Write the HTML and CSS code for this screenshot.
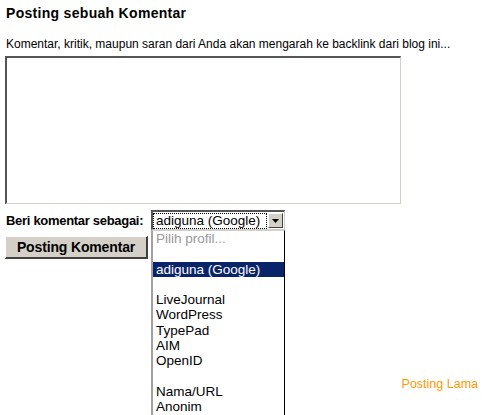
FILE: index.html
```html
<!DOCTYPE html>
<html lang="id">
<head>
    <meta charset="UTF-8">
    <meta name="viewport" content="width=device-width, initial-scale=1.0">
    <title>Posting sebuah Komentar</title>
    <link rel="stylesheet" href="styles.css">
</head>
<body>
    <div class="comment-form">
        <h4 class="comment-title">Posting sebuah Komentar</h4>
        <p class="comment-note">Komentar, kritik, maupun saran dari Anda akan mengarah ke backlink dari blog ini...</p>
        <textarea class="comment-body"></textarea>

        <div class="identity-row">
            <label class="identity-label">Beri komentar sebagai:</label>
            <div class="identity-select">
                <div class="select-box">
                    <span class="select-value">adiguna (Google)</span>
                    <span class="select-arrow">
                        <svg width="7" height="4" viewBox="0 0 7 4"><path d="M0 0h7L3.5 4z" fill="#000"/></svg>
                    </span>
                </div>

                <!-- open profile list -->
                <ul class="select-list">
                    <li class="muted">Pilih profil...</li>
                    <li></li>
                    <li class="selected">adiguna (Google)</li>
                    <li></li>
                    <li>LiveJournal</li>
                    <li>WordPress</li>
                    <li>TypePad</li>
                    <li>AIM</li>
                    <li>OpenID</li>
                    <li></li>
                    <li>Nama/URL</li>
                    <li>Anonim</li>
                </ul>
            </div>
        </div>

        <button class="post-button">Posting Komentar</button>
    </div>

    <div class="pager">
        <a class="older-link" href="#">Posting Lama</a>
    </div>
</body>
</html>
```

FILE: styles.css
```css
* {
    margin: 0;
    padding: 0;
    box-sizing: border-box;
}

html {
    height: 100%;
    overflow: hidden;
}

body {
    font-family: "Liberation Sans", Arial, sans-serif;
    font-size: 12px;
    color: #000;
    background: #fff;
    height: 100%;
    padding: 5px 12px 0 5px;
}

.comment-title {
    font-size: 14px;
    font-weight: bold;
    line-height: 16px;
    letter-spacing: 0.3px;
    padding-left: 1px;
}

.comment-note {
    line-height: 15px;
    margin-top: 16px;
    padding-left: 1px;
}

/* classic inset field */
.comment-body {
    display: block;
    width: 396px;
    height: 148px;
    margin-top: 4px;
    border-style: solid;
    border-width: 2px 1px 1px 2px;
    border-color: #555 #d4d0c8 #d4d0c8 #555;
    resize: none;
    background: #fff;
}

.identity-row {
    display: flex;
    align-items: center;
    margin-top: 6px;
}

.identity-label {
    font-weight: bold;
    font-size: 13px;
    letter-spacing: -0.3px;
    padding-left: 1px;
    width: 146px;
}

.identity-select {
    position: relative;
}

.select-box {
    display: flex;
    align-items: center;
    width: 134px;
    height: 20px;
    border-style: solid;
    border-width: 2px 1px 1px 2px;
    border-color: #555 #d4d0c8 #d4d0c8 #555;
    padding: 0 1px 0 0;
}

.select-value {
    flex: 1;
    font-size: 13.5px;
    line-height: 16px;
    padding: 0 1px 0 3px;
    outline: 1px dotted #000;
    outline-offset: -1px;
    white-space: nowrap;
    overflow: hidden;
}

.select-arrow {
    display: flex;
    align-items: center;
    justify-content: center;
    flex: none;
    width: 15px;
    height: 15px;
    margin-left: 1px;
    background: #d4d0c8;
    border-style: solid;
    border-width: 1px;
    border-color: #fff #404040 #404040 #fff;
}

.select-list {
    position: absolute;
    top: 20px;
    left: 0;
    width: 134px;
    list-style: none;
    background: #fff;
    border-left: 2px solid #a0a0a0;
    border-right: 1px solid #000;
    border-top: 1px solid #d4d0c8;
    z-index: 10;
}

.select-list li {
    height: 15.3px;
    line-height: 15px;
    font-size: 13.5px;
    padding-left: 3px;
    white-space: nowrap;
}

.select-list li.muted {
    color: #999;
}

.select-list li.selected {
    background: #0a246a;
    color: #fff;
}

.post-button {
    display: block;
    margin-top: 6px;
    width: 143px;
    height: 23px;
    font-family: "Liberation Sans", Arial, sans-serif;
    font-size: 14px;
    font-weight: bold;
    letter-spacing: -0.15px;
    background: #d4d0c8;
    border-style: solid;
    border-width: 1px 2px 2px 1px;
    border-color: #fff #404040 #404040 #fff;
}

.pager {
    text-align: right;
    margin-top: 118px;
}

.older-link {
    color: #ff9900;
    text-decoration: none;
    font-size: 12.5px;
}
```
